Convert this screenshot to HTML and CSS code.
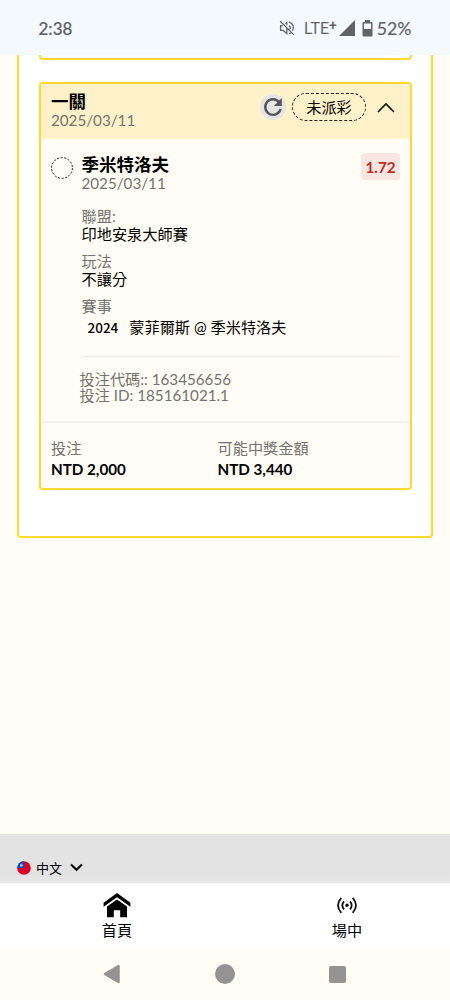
FILE: index.html
```html
<!DOCTYPE html>
<html lang="zh-Hant">

<head>
  <meta charset="utf-8">
  <title>投注紀錄</title>
  <meta name="viewport" content="width=device-width, initial-scale=1.0">
  <link rel="stylesheet" href="styles.css">
</head>

<body>
  <div class="statusbar">
    <span class="clock">2:38</span>
    <div class="status-icons">
      <svg class="mute" width="16" height="16" viewBox="0 0 16 16" fill="none" stroke="#626365" stroke-width="1.3">
        <path d="M1.2 1.2l13.4 13.400M3.8 5.600H1.600v4.800h2.600l3.600 3.100V8.500M6.400 3.800l1.400-1.200v2.600M10 5.600c1.300.8 1.700 2 1.400 3.200M10 2.200c4.200 1.200 5.500 5.400 3.500 8.600M10 13.600l1.700-.8M10 8.600v2" />
      </svg>
      <span class="lte">LTE<sup>+</sup></span>
      <svg class="signal" width="16" height="16" viewBox="0 0 16 16"><path d="M16 0v16H0z" fill="#626365" /></svg>
      <svg class="battery" width="11" height="17" viewBox="0 0 11 17">
        <path d="M3 0h5v2h1.5q1 0 1 1v12.5q0 1-1 1h-8q-1 0-1-1V3q0-1 1-1H3z" fill="#626365" />
        <path d="M2 3.5h7V9H2z" fill="#f5fafe" />
      </svg>
      <span class="percent">52%</span>
    </div>
  </div>

  <!-- -------------------------------------------------------------------- -->

  <div class="content">
    <div class="list">
      <div class="card card-prev"></div>

      <div class="card">
        <div class="card-header">
          <div>
            <h3>一關</h3>
            <p class="muted">2025/03/11</p>
          </div>
          <div class="actions">
            <button class="refresh">
              <svg width="20" height="20" viewBox="0 0 20 20">
                <path d="M16.2 5.2A7.8 7.8 0 1 0 17.6 12" fill="none" stroke="#555" stroke-width="2.4" />
                <path d="M18.8 1v8h-8z" fill="#555" />
              </svg>
            </button>
            <span class="state">未派彩</span>
            <svg class="chevron" width="18" height="11" viewBox="0 0 18 11">
              <path d="M1 10l8-8 8 8" fill="none" stroke="#111" stroke-width="1.6" />
            </svg>
          </div>
        </div>

        <div class="bet">
          <svg class="ring" width="22" height="22" viewBox="0 0 22 22">
            <circle cx="11" cy="11" r="10.4" fill="none" stroke="#222" stroke-width="1" stroke-dasharray="2.2 1.43" />
          </svg>
          <div class="detail">
            <div class="pick">
              <div>
                <h3>季米特洛夫</h3>
                <p class="muted">2025/03/11</p>
              </div>
              <span class="odds">1.72</span>
            </div>
            <dl>
              <dt>聯盟:</dt>
              <dd>印地安泉大師賽</dd>
              <dt>玩法</dt>
              <dd>不讓分</dd>
              <dt>賽事</dt>
              <dd class="match"><span class="year">2024</span>蒙菲爾斯 @ 季米特洛夫</dd>
            </dl>
            <div class="codes">
              <p>投注代碼:: 163456656</p>
              <p>投注 ID: 185161021.1</p>
            </div>
          </div>
        </div>

        <div class="totals">
          <div>
            <p class="muted">投注</p>
            <p class="amount">NTD 2,000</p>
          </div>
          <div>
            <p class="muted">可能中獎金額</p>
            <p class="amount">NTD 3,440</p>
          </div>
        </div>
      </div>
    </div>
  </div>

  <!-- -------------------------------------------------------------------- -->

  <div class="language">
    <svg width="14" height="14" viewBox="0 0 14 14">
      <circle cx="7" cy="7" r="6.8" fill="#d80027" />
      <path d="M7 .2V7H.2A6.8 6.8 0 0 1 7 .2z" fill="#0052b4" />
      <circle cx="4.4" cy="4.3" r="1.5" fill="#8fb4e0" />
    </svg>
    <span>中文</span>
    <svg class="arrow" width="13" height="9" viewBox="0 0 13 9">
      <path d="M1 1.5l5.5 5.3L12 1.5" fill="none" stroke="#000" stroke-width="2.1" />
    </svg>
  </div>

  <div class="tabs">
    <a class="tab">
      <svg width="28" height="25" viewBox="0 0 28 25">
        <path d="M14 0l13.4 9.7v4L14 4.2.6 13.7v-4z" />
        <path d="M14 6.500l10 7V24.3h-6.8v-7h-6.400v7H4V13.500z" />
      </svg>
      <span>首頁</span>
    </a>
    <a class="tab tab-live">
      <svg width="20" height="25" viewBox="0 0 20 25" fill="none" stroke="#111" stroke-width="1.8">
        <circle cx="10" cy="12.3" r="1.7" fill="#111" stroke="none" />
        <path d="M7 8.300q-3.400 4 0 8M13 8.300q3.400 4 0 8M4.300 4.800q-6.600 7.500 0 15M15.700 4.800q6.600 7.500 0 15" />
      </svg>
      <span>場中</span>
    </a>
  </div>

  <div class="sysnav">
    <svg width="18" height="20" viewBox="0 0 18 20"><path d="M2 10L15.5 2v16z" fill="#959391" stroke="#959391" stroke-width="2.5" stroke-linejoin="round" /></svg>
    <span class="home"></span>
    <span class="recent"></span>
  </div>
</body>

</html>
```
FILE: styles.css
```css
* {
  box-sizing: border-box;
}

body {
  margin: 0;
  height: 1000px;
  display: flex;
  flex-direction: column;
  overflow: hidden;
  background-color: #fffdf5;
  color: #000;
  font-family: Lato, "Noto Sans CJK TC", sans-serif;
  font-size: 15.2px;
  line-height: 18px;
}

h3, p, dl, dd {
  margin: 0;
}

h3 {
  font-size: 17.5px;
  line-height: 18px;
}

svg {
  display: block;
  flex: none;
}

.muted {
  color: #757370;
}

/* ----------------------------- STATUS BAR ---------------------------- */

.statusbar {
  flex: none;
  height: 55px;
  padding: 1px 38.5px 0;
  display: flex;
  align-items: center;
  justify-content: space-between;
  background-color: #f5fafe;
  color: #626365;
}

.clock {
  font: 500 17px Lato, sans-serif;
  -webkit-text-stroke: .2px;
}

.status-icons {
  display: flex;
  align-items: center;
}

.lte {
  margin-left: 9px;
  font: 16px Roboto, sans-serif;
  white-space: nowrap;
}

.lte sup {
  font-size: 14px;
  font-weight: 500;
  line-height: 0;
  vertical-align: 4px;
}

.signal {
  margin-left: 2px;
}

.battery {
  margin: 0 4px 0 7px;
}

.percent {
  font: 17.7px Lato, sans-serif;
  -webkit-text-stroke: .2px;
}

/* -------------------------------- CARD ------------------------------- */

.content {
  height: 779px;
  padding: 0 17px;
}

.list {
  height: 483px;
  padding: 0 19px 0 20px;
  border: 2px solid #ffd92e;
  border-top: none;
  border-radius: 0 0 4px 4px;
  background-color: #fff;
}

.card {
  height: 408px;
  border: 2px solid #ffd92e;
  border-radius: 4px;
  background-color: #fffdf5;
}

.card-prev {
  height: 5px;
  margin-bottom: 22px;
  border-top: none;
  border-radius: 0 0 4px 4px;
  background-color: #fff;
}

.card-header {
  height: 55px;
  padding: 9px 15px 0 10px;
  display: flex;
  justify-content: space-between;
  background-color: #fff2cb;
}

.actions {
  height: 30px;
  margin-top: -1px;
  display: flex;
  align-items: center;
}

.refresh {
  width: 26px;
  height: 26px;
  padding: 3px;
  border: none;
  border-radius: 50%;
  background-color: #e5e5e5;
}

.state {
  width: 74px;
  height: 28px;
  margin: 0 11px 0 6px;
  border: 1px dashed #222;
  border-radius: 14px;
  line-height: 26px;
  text-align: center;
}

/* --------------------------------- BET ------------------------------- */

.bet {
  height: 282px;
  padding: 17px 10px 0;
  display: flex;
  gap: 8.5px;
}

.ring {
  margin-top: 1px;
}

.detail {
  flex: 1;
}

.pick {
  display: flex;
  justify-content: space-between;
}

.odds {
  width: 39px;
  height: 27px;
  margin-top: -3px;
  border-radius: 4px;
  background-color: #f8e6e0;
  color: #bf2b24;
  font-weight: bold;
  line-height: 28px;
  text-align: center;
}

dl {
  width: 317px;
  height: 165px;
  padding-top: 15px;
  border-bottom: 1px solid #ebe8e4;
}

dt {
  color: #757370;
}

dd {
  margin-bottom: 9px;
}

.match {
  padding: 3px 0 0 6px;
}

.year {
  margin-right: 11px;
  font-family: "Noto Sans CJK TC", sans-serif;
  font-size: 13.5px;
  font-weight: 500;
}

.codes {
  margin: 14px 0 0 -2px;
  color: #757370;
  line-height: 16px;
}

.totals {
  height: 67px;
  padding: 16px 10px 0;
  display: grid;
  grid-template-columns: 166.5px 1fr;
  border-top: 2px solid #f3f0ec;
}

.amount {
  margin-top: 3px;
  font-weight: bold;
}

/* ------------------------------- BOTTOM ------------------------------ */

.language {
  height: 49px;
  padding: 18px 17px 0;
  display: flex;
  align-items: center;
  background: linear-gradient(#e3e3e3 80%, #e8e8e8);
  font-size: 13px;
}

.language span {
  margin: 0 8px 0 5px;
}

.tabs {
  height: 65px;
  display: flex;
  background-color: #fff;
}

.tab {
  flex: none;
  width: 234px;
  padding-top: 10px;
  display: flex;
  flex-direction: column;
  align-items: center;
  gap: 3px;
}

.tab-live {
  width: 226px;
}

.sysnav {
  height: 52px;
  padding: 0 104px 0 103px;
  display: flex;
  align-items: center;
  justify-content: space-between;
}

.home {
  width: 20px;
  height: 20px;
  border-radius: 50%;
  background-color: #959391;
}

.recent {
  width: 17px;
  height: 17px;
  border-radius: 2px;
  background-color: #959391;
}
```
